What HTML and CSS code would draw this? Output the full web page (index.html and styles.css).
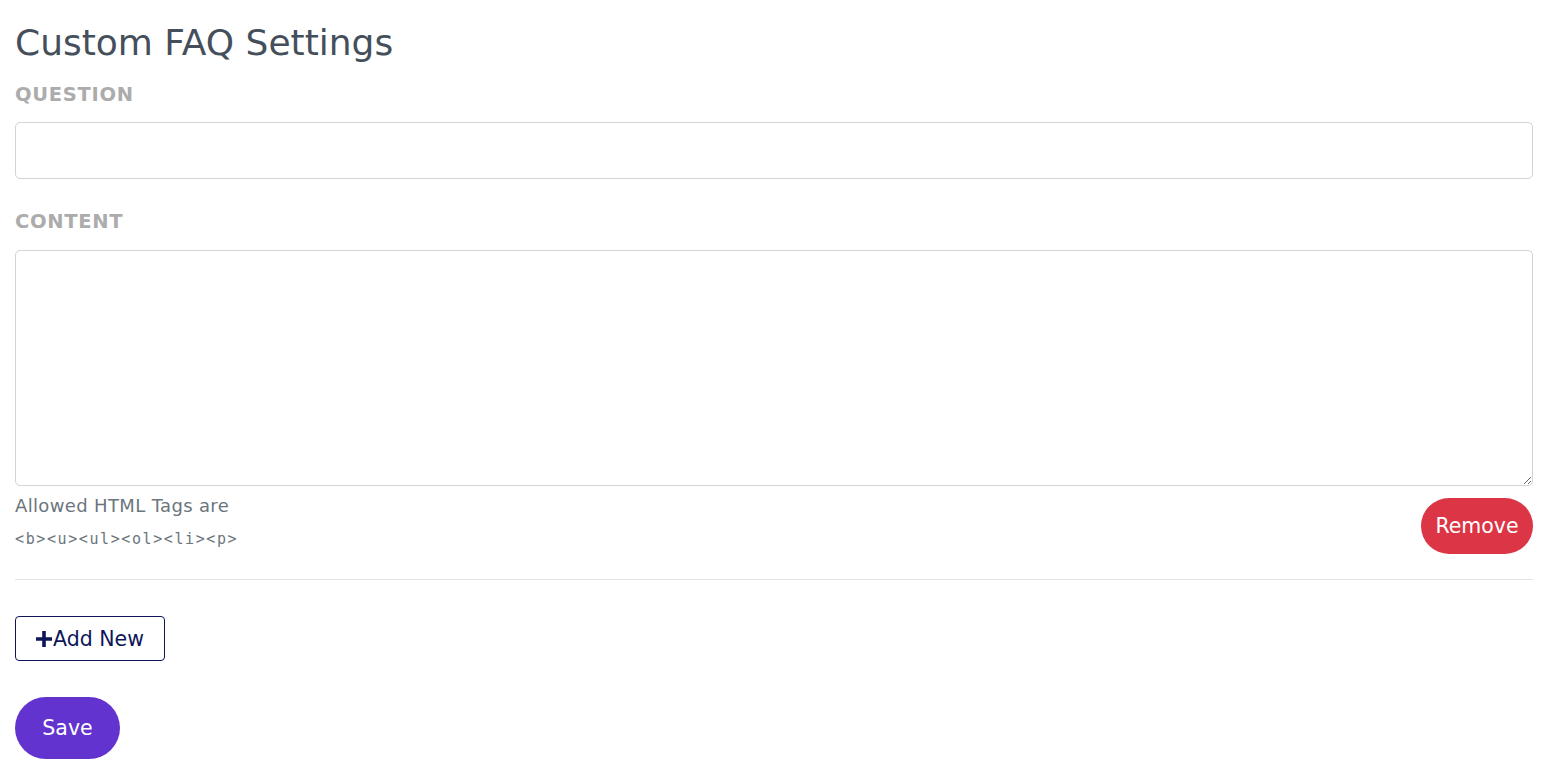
FILE: index.html
```html
<!DOCTYPE html>
<html lang="en">
<head>
<meta charset="utf-8">
<title>Custom FAQ Settings</title>
<link rel="stylesheet" href="styles.css">
</head>
<body>
<div class="page">
  <h1 class="title">Custom FAQ Settings</h1>
  <div class="faq-item">
    <label class="field-label" for="q">Question</label>
    <input class="field-input" id="q" type="text">
    <label class="field-label content-label" for="c">Content</label>
    <textarea class="field-textarea" id="c"></textarea>
    <div class="help-row">
      <div class="help-text">
        <div class="help-line">Allowed HTML Tags are</div>
        <code class="help-code">&lt;b&gt;&lt;u&gt;&lt;ul&gt;&lt;ol&gt;&lt;li&gt;&lt;p&gt;</code>
      </div>
      <button class="btn-remove" type="button">Remove</button>
    </div>
  </div>
  <hr class="divider">
  <button class="btn-add" type="button"><svg class="plus" viewBox="0 0 18 18" width="18" height="18"><path d="M9 1v16M1 9h16" stroke="currentColor" stroke-width="3.6" stroke-linecap="butt"/></svg>Add New</button>
  <div class="save-row">
    <button class="btn-save" type="button">Save</button>
  </div>
</div>
</body>
</html>
```

FILE: styles.css
```css
* { box-sizing: border-box; }
html, body { margin: 0; padding: 0; background: #fff; }
body { font-family: "DejaVu Sans", "Open Sans", sans-serif; color: #454f5b; }
.page { padding: 18px 30px 0 15px; }
.title {
  margin: 0 0 15px;
  font-size: 36px;
  font-weight: 400;
  line-height: 50px;
  color: #454f5b;
}
.field-label {
  display: block;
  font-size: 19.5px;
  font-weight: 700;
  text-transform: uppercase;
  letter-spacing: 0.7px;
  color: #acacac;
  line-height: 24px;
  margin-bottom: 15px;
}
.content-label { margin-top: 31px; margin-bottom: 16px; }
.field-input {
  display: block;
  width: 100%;
  height: 57px;
  border: 1px solid #ced4da;
  border-radius: 5px;
  background: #fff;
  outline: none;
  font-family: inherit;
  font-size: 16px;
}
.field-textarea {
  display: block;
  width: 100%;
  height: 236px;
  border: 1px solid #ced4da;
  border-radius: 5px;
  background: #fff;
  outline: none;
  font-family: inherit;
  font-size: 16px;
  resize: vertical;
}
.help-row {
  display: flex;
  justify-content: space-between;
  align-items: flex-start;
  margin-top: 8px;
}
.help-line {
  font-size: 18px;
  line-height: 24px;
  letter-spacing: 0.35px;
  color: #6c757d;
}
.help-code {
  display: block;
  margin-top: 12px;
  font-family: "DejaVu Sans Mono", "Liberation Mono", monospace;
  font-size: 15px;
  line-height: 18px;
  letter-spacing: 1.6px;
  color: #6c757d;
}
.btn-remove {
  margin-top: 4px;
  height: 56px;
  width: 112px;
  padding: 0;
  border: none;
  border-radius: 28px;
  background: #dc3545;
  color: #fff;
  font-family: inherit;
  font-size: 20.5px;
  cursor: pointer;
}
.divider {
  margin: 25px 0 36px;
  border: 0;
  border-top: 1px solid #e3e3e3;
}
.btn-add {
  display: inline-flex;
  align-items: center;
  height: 45px;
  width: 150px;
  padding: 0 0 0 19px;
  border: 1px solid #0e1658;
  border-radius: 4px;
  background: #fff;
  color: #0e1658;
  font-family: inherit;
  font-size: 20.5px;
  cursor: pointer;
}
.plus { margin-right: 0; flex: none; }
.save-row { margin-top: 36px; }
.btn-save {
  height: 62px;
  width: 105px;
  padding: 0;
  border: none;
  border-radius: 31px;
  background: #6233cf;
  color: #fff;
  font-family: inherit;
  font-size: 20.5px;
  cursor: pointer;
}
```
